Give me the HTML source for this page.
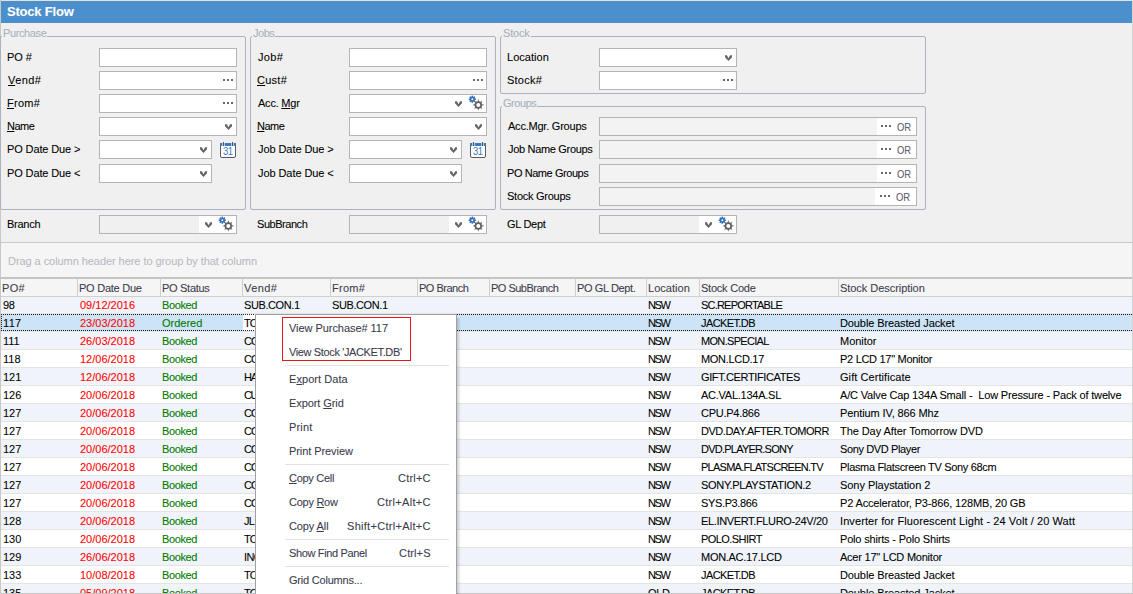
<!DOCTYPE html><html><head><meta charset="utf-8"><title>Stock Flow</title><style>
*{box-sizing:border-box;margin:0;padding:0}
html,body{width:1133px;height:594px;overflow:hidden}
body{position:relative;background:#f0f0f0;font-family:"Liberation Sans",sans-serif;font-size:11px;color:#000;-webkit-text-stroke:0.08px currentColor}
.abs{position:absolute}
.t{position:absolute;white-space:pre;line-height:13px}
.box{position:absolute;border:1px solid #abb2bb;border-radius:2px}
.leg{position:absolute;white-space:pre;color:#a9b1bd;background:#f0f0f0;padding:0 1px 0 1px;line-height:13px}
.in{position:absolute;background:#fff;border:1px solid #b4b4b4;height:19px}
.dis{background:#f0f0f0}
.chev{position:absolute}
.dots{position:absolute}
u{text-decoration:underline;text-underline-offset:1px}
.row{position:absolute;left:1px;width:1131px;height:18px;border-bottom:1px solid #e4e4e4}
.c{position:absolute;white-space:pre;line-height:17px}
.hd{position:absolute;white-space:pre;line-height:17px;color:#3c3c4c}
.mi{position:absolute;left:33px;white-space:pre;line-height:24px;color:#3b3b4b}
.sc{position:absolute;white-space:pre;line-height:24px;color:#3b3b4b}
.sep{position:absolute;left:29px;width:164px;height:1px;background:#e2e2e2}
</style></head><body>
<div class="abs" style="left:0;top:0;width:1133px;height:1px;background:#e4e0dc"></div>
<div class="abs" style="left:0;top:0;width:1px;height:594px;background:#c8c8c8"></div>
<div class="abs" style="left:1132px;top:0;width:1px;height:594px;background:#d4d4d4"></div>
<div class="abs" style="left:1px;top:1px;width:1131px;height:22px;background:#4c8fcd"></div>
<div class="t" style="left:7px;top:4px;color:#fff;font-weight:bold;font-size:13px;line-height:15px;letter-spacing:-0.2px">Stock Flow</div>
<div class="box" style="left:0px;top:36px;width:246px;height:174px"></div>
<div class="leg" style="left:2px;top:27px;letter-spacing:-0.383px;">Purchase</div>
<div class="box" style="left:250px;top:36px;width:246px;height:174px"></div>
<div class="leg" style="left:252px;top:27px;letter-spacing:-0.483px;">Jobs</div>
<div class="box" style="left:500px;top:36px;width:426px;height:58px"></div>
<div class="leg" style="left:502px;top:27px;letter-spacing:-0.179px;">Stock</div>
<div class="box" style="left:500px;top:106px;width:426px;height:104px"></div>
<div class="leg" style="left:502px;top:97px;letter-spacing:-0.456px;">Groups</div>
<div class="t" style="left:7px;top:51px;letter-spacing:-0.026px;">PO #</div>
<div class="in" style="left:99px;top:48px;width:138px"></div>
<div class="t" style="left:8px;top:74px;letter-spacing:0.399px;"><u>V</u>end#</div>
<div class="in" style="left:99px;top:71px;width:138px"></div>
<svg class="dots" style="left:223px;top:79px" width="11" height="3" viewBox="0 0 11 3"><rect x="0" y="0" width="2" height="2" fill="#686868"/><rect x="4" y="0" width="2" height="2" fill="#686868"/><rect x="8" y="0" width="2" height="2" fill="#686868"/></svg>
<div class="t" style="left:7px;top:97px;letter-spacing:0.255px;"><u>F</u>rom#</div>
<div class="in" style="left:99px;top:94px;width:138px"></div>
<svg class="dots" style="left:223px;top:102px" width="11" height="3" viewBox="0 0 11 3"><rect x="0" y="0" width="2" height="2" fill="#686868"/><rect x="4" y="0" width="2" height="2" fill="#686868"/><rect x="8" y="0" width="2" height="2" fill="#686868"/></svg>
<div class="t" style="left:7px;top:120px;letter-spacing:-0.515px;"><u>N</u>ame</div>
<div class="in" style="left:99px;top:117px;width:138px"></div>
<svg class="chev" style="left:225px;top:124px" width="7" height="6" viewBox="0 0 7 6"><path d="M0 0.3 L1.9 0.3 L3.5 3.2 L5.1 0.3 L7 0.3 L7 2.2 L3.5 6 L0 2.2 Z" fill="#656565"/></svg>
<div class="t" style="left:7px;top:143px;letter-spacing:-0.126px;">PO Date Due &gt;</div>
<div class="in" style="left:99px;top:140px;width:113px"></div>
<svg class="chev" style="left:200px;top:147px" width="7" height="6" viewBox="0 0 7 6"><path d="M0 0.3 L1.9 0.3 L3.5 3.2 L5.1 0.3 L7 0.3 L7 2.2 L3.5 6 L0 2.2 Z" fill="#656565"/></svg>
<svg class="abs" style="left:220px;top:142px" width="16" height="16" viewBox="0 0 16 16" shape-rendering="crispEdges"><path d="M0.5 4 V14 Q0.5 15.5 2 15.5 H14 Q15.5 15.5 15.5 14 V4" fill="#fff" stroke="#5a5a5a" stroke-width="1" shape-rendering="auto"/><rect x="0" y="1" width="2" height="3" fill="#3a78c0"/><rect x="5" y="1" width="6" height="3" fill="#3a78c0"/><rect x="14" y="1" width="2" height="3" fill="#3a78c0"/><rect x="3" y="0" width="1" height="4" fill="#555"/><rect x="12" y="0" width="1" height="4" fill="#555"/><rect x="2" y="1" width="1" height="3" fill="#3a78c0" opacity=".35"/><rect x="4" y="1" width="1" height="3" fill="#3a78c0" opacity=".35"/><rect x="11" y="1" width="1" height="3" fill="#3a78c0" opacity=".35"/><rect x="13" y="1" width="1" height="3" fill="#3a78c0" opacity=".35"/><text x="8.3" y="13.1" font-family="Liberation Sans" font-size="10" fill="#3a78c0" text-anchor="middle" letter-spacing="-0.3" transform="scale(0.95 1)" style="font-weight:normal">31</text></svg>
<div class="t" style="left:7px;top:167px;letter-spacing:-0.126px;">PO Date Due &lt;</div>
<div class="in" style="left:99px;top:164px;width:113px"></div>
<svg class="chev" style="left:200px;top:171px" width="7" height="6" viewBox="0 0 7 6"><path d="M0 0.3 L1.9 0.3 L3.5 3.2 L5.1 0.3 L7 0.3 L7 2.2 L3.5 6 L0 2.2 Z" fill="#656565"/></svg>
<div class="t" style="left:7px;top:218px;letter-spacing:-0.252px;">Branch</div>
<div class="in dis" style="left:99px;top:215px;width:138px"></div>
<div class="abs" style="left:199px;top:216px;width:37px;height:17px;background:#fff"></div>
<svg class="chev" style="left:205px;top:222px" width="7" height="6" viewBox="0 0 7 6"><path d="M0 0.3 L1.9 0.3 L3.5 3.2 L5.1 0.3 L7 0.3 L7 2.2 L3.5 6 L0 2.2 Z" fill="#656565"/></svg>
<svg class="abs" style="left:217px;top:216px" width="17" height="17" viewBox="0 0 17 17"><g fill="#2e6fba"><circle cx="5.3" cy="4.2" r="2.5"/><rect x="4.55" y="0.60" width="1.5" height="1.6" transform="rotate(0 5.3 4.2)"/><rect x="4.55" y="0.60" width="1.5" height="1.6" transform="rotate(45 5.3 4.2)"/><rect x="4.55" y="0.60" width="1.5" height="1.6" transform="rotate(90 5.3 4.2)"/><rect x="4.55" y="0.60" width="1.5" height="1.6" transform="rotate(135 5.3 4.2)"/><rect x="4.55" y="0.60" width="1.5" height="1.6" transform="rotate(180 5.3 4.2)"/><rect x="4.55" y="0.60" width="1.5" height="1.6" transform="rotate(225 5.3 4.2)"/><rect x="4.55" y="0.60" width="1.5" height="1.6" transform="rotate(270 5.3 4.2)"/><rect x="4.55" y="0.60" width="1.5" height="1.6" transform="rotate(315 5.3 4.2)"/></g><circle cx="5.3" cy="4.2" r="1.0" fill="#fff"/><g fill="#606060"><circle cx="11.3" cy="9.9" r="3.7"/><path d="M10.45 6.70 L11.30 4.10 L12.15 6.70 Z" transform="rotate(0.0 11.3 9.9)"/><path d="M10.45 6.70 L11.30 4.10 L12.15 6.70 Z" transform="rotate(45.0 11.3 9.9)"/><path d="M10.45 6.70 L11.30 4.10 L12.15 6.70 Z" transform="rotate(90.0 11.3 9.9)"/><path d="M10.45 6.70 L11.30 4.10 L12.15 6.70 Z" transform="rotate(135.0 11.3 9.9)"/><path d="M10.45 6.70 L11.30 4.10 L12.15 6.70 Z" transform="rotate(180.0 11.3 9.9)"/><path d="M10.45 6.70 L11.30 4.10 L12.15 6.70 Z" transform="rotate(225.0 11.3 9.9)"/><path d="M10.45 6.70 L11.30 4.10 L12.15 6.70 Z" transform="rotate(270.0 11.3 9.9)"/><path d="M10.45 6.70 L11.30 4.10 L12.15 6.70 Z" transform="rotate(315.0 11.3 9.9)"/></g><circle cx="11.3" cy="9.9" r="2.0" fill="#fff"/></svg>
<div class="t" style="left:258px;top:51px;letter-spacing:0.314px;">Job#</div>
<div class="in" style="left:349px;top:48px;width:138px"></div>
<div class="t" style="left:257px;top:74px;letter-spacing:0.263px;"><u>C</u>ust#</div>
<div class="in" style="left:349px;top:71px;width:138px"></div>
<svg class="dots" style="left:473px;top:79px" width="11" height="3" viewBox="0 0 11 3"><rect x="0" y="0" width="2" height="2" fill="#686868"/><rect x="4" y="0" width="2" height="2" fill="#686868"/><rect x="8" y="0" width="2" height="2" fill="#686868"/></svg>
<div class="t" style="left:258px;top:97px;letter-spacing:-0.229px;">Acc. <u>M</u>gr</div>
<div class="in" style="left:349px;top:94px;width:138px"></div>
<svg class="chev" style="left:455px;top:101px" width="7" height="6" viewBox="0 0 7 6"><path d="M0 0.3 L1.9 0.3 L3.5 3.2 L5.1 0.3 L7 0.3 L7 2.2 L3.5 6 L0 2.2 Z" fill="#656565"/></svg>
<svg class="abs" style="left:467px;top:95px" width="17" height="17" viewBox="0 0 17 17"><g fill="#2e6fba"><circle cx="5.3" cy="4.2" r="2.5"/><rect x="4.55" y="0.60" width="1.5" height="1.6" transform="rotate(0 5.3 4.2)"/><rect x="4.55" y="0.60" width="1.5" height="1.6" transform="rotate(45 5.3 4.2)"/><rect x="4.55" y="0.60" width="1.5" height="1.6" transform="rotate(90 5.3 4.2)"/><rect x="4.55" y="0.60" width="1.5" height="1.6" transform="rotate(135 5.3 4.2)"/><rect x="4.55" y="0.60" width="1.5" height="1.6" transform="rotate(180 5.3 4.2)"/><rect x="4.55" y="0.60" width="1.5" height="1.6" transform="rotate(225 5.3 4.2)"/><rect x="4.55" y="0.60" width="1.5" height="1.6" transform="rotate(270 5.3 4.2)"/><rect x="4.55" y="0.60" width="1.5" height="1.6" transform="rotate(315 5.3 4.2)"/></g><circle cx="5.3" cy="4.2" r="1.0" fill="#fff"/><g fill="#606060"><circle cx="11.3" cy="9.9" r="3.7"/><path d="M10.45 6.70 L11.30 4.10 L12.15 6.70 Z" transform="rotate(0.0 11.3 9.9)"/><path d="M10.45 6.70 L11.30 4.10 L12.15 6.70 Z" transform="rotate(45.0 11.3 9.9)"/><path d="M10.45 6.70 L11.30 4.10 L12.15 6.70 Z" transform="rotate(90.0 11.3 9.9)"/><path d="M10.45 6.70 L11.30 4.10 L12.15 6.70 Z" transform="rotate(135.0 11.3 9.9)"/><path d="M10.45 6.70 L11.30 4.10 L12.15 6.70 Z" transform="rotate(180.0 11.3 9.9)"/><path d="M10.45 6.70 L11.30 4.10 L12.15 6.70 Z" transform="rotate(225.0 11.3 9.9)"/><path d="M10.45 6.70 L11.30 4.10 L12.15 6.70 Z" transform="rotate(270.0 11.3 9.9)"/><path d="M10.45 6.70 L11.30 4.10 L12.15 6.70 Z" transform="rotate(315.0 11.3 9.9)"/></g><circle cx="11.3" cy="9.9" r="2.0" fill="#fff"/></svg>
<div class="t" style="left:257px;top:120px;letter-spacing:-0.515px;"><u>N</u>ame</div>
<div class="in" style="left:349px;top:117px;width:138px"></div>
<svg class="chev" style="left:475px;top:124px" width="7" height="6" viewBox="0 0 7 6"><path d="M0 0.3 L1.9 0.3 L3.5 3.2 L5.1 0.3 L7 0.3 L7 2.2 L3.5 6 L0 2.2 Z" fill="#656565"/></svg>
<div class="t" style="left:258px;top:143px;letter-spacing:-0.073px;">Job Date Due &gt;</div>
<div class="in" style="left:349px;top:140px;width:113px"></div>
<svg class="chev" style="left:450px;top:147px" width="7" height="6" viewBox="0 0 7 6"><path d="M0 0.3 L1.9 0.3 L3.5 3.2 L5.1 0.3 L7 0.3 L7 2.2 L3.5 6 L0 2.2 Z" fill="#656565"/></svg>
<svg class="abs" style="left:470px;top:142px" width="16" height="16" viewBox="0 0 16 16" shape-rendering="crispEdges"><path d="M0.5 4 V14 Q0.5 15.5 2 15.5 H14 Q15.5 15.5 15.5 14 V4" fill="#fff" stroke="#5a5a5a" stroke-width="1" shape-rendering="auto"/><rect x="0" y="1" width="2" height="3" fill="#3a78c0"/><rect x="5" y="1" width="6" height="3" fill="#3a78c0"/><rect x="14" y="1" width="2" height="3" fill="#3a78c0"/><rect x="3" y="0" width="1" height="4" fill="#555"/><rect x="12" y="0" width="1" height="4" fill="#555"/><rect x="2" y="1" width="1" height="3" fill="#3a78c0" opacity=".35"/><rect x="4" y="1" width="1" height="3" fill="#3a78c0" opacity=".35"/><rect x="11" y="1" width="1" height="3" fill="#3a78c0" opacity=".35"/><rect x="13" y="1" width="1" height="3" fill="#3a78c0" opacity=".35"/><text x="8.3" y="13.1" font-family="Liberation Sans" font-size="10" fill="#3a78c0" text-anchor="middle" letter-spacing="-0.3" transform="scale(0.95 1)" style="font-weight:normal">31</text></svg>
<div class="t" style="left:258px;top:167px;letter-spacing:-0.073px;">Job Date Due &lt;</div>
<div class="in" style="left:349px;top:164px;width:113px"></div>
<svg class="chev" style="left:450px;top:171px" width="7" height="6" viewBox="0 0 7 6"><path d="M0 0.3 L1.9 0.3 L3.5 3.2 L5.1 0.3 L7 0.3 L7 2.2 L3.5 6 L0 2.2 Z" fill="#656565"/></svg>
<div class="t" style="left:257px;top:218px;letter-spacing:-0.455px;">SubBranch</div>
<div class="in dis" style="left:349px;top:215px;width:138px"></div>
<div class="abs" style="left:449px;top:216px;width:37px;height:17px;background:#fff"></div>
<svg class="chev" style="left:455px;top:222px" width="7" height="6" viewBox="0 0 7 6"><path d="M0 0.3 L1.9 0.3 L3.5 3.2 L5.1 0.3 L7 0.3 L7 2.2 L3.5 6 L0 2.2 Z" fill="#656565"/></svg>
<svg class="abs" style="left:467px;top:216px" width="17" height="17" viewBox="0 0 17 17"><g fill="#2e6fba"><circle cx="5.3" cy="4.2" r="2.5"/><rect x="4.55" y="0.60" width="1.5" height="1.6" transform="rotate(0 5.3 4.2)"/><rect x="4.55" y="0.60" width="1.5" height="1.6" transform="rotate(45 5.3 4.2)"/><rect x="4.55" y="0.60" width="1.5" height="1.6" transform="rotate(90 5.3 4.2)"/><rect x="4.55" y="0.60" width="1.5" height="1.6" transform="rotate(135 5.3 4.2)"/><rect x="4.55" y="0.60" width="1.5" height="1.6" transform="rotate(180 5.3 4.2)"/><rect x="4.55" y="0.60" width="1.5" height="1.6" transform="rotate(225 5.3 4.2)"/><rect x="4.55" y="0.60" width="1.5" height="1.6" transform="rotate(270 5.3 4.2)"/><rect x="4.55" y="0.60" width="1.5" height="1.6" transform="rotate(315 5.3 4.2)"/></g><circle cx="5.3" cy="4.2" r="1.0" fill="#fff"/><g fill="#606060"><circle cx="11.3" cy="9.9" r="3.7"/><path d="M10.45 6.70 L11.30 4.10 L12.15 6.70 Z" transform="rotate(0.0 11.3 9.9)"/><path d="M10.45 6.70 L11.30 4.10 L12.15 6.70 Z" transform="rotate(45.0 11.3 9.9)"/><path d="M10.45 6.70 L11.30 4.10 L12.15 6.70 Z" transform="rotate(90.0 11.3 9.9)"/><path d="M10.45 6.70 L11.30 4.10 L12.15 6.70 Z" transform="rotate(135.0 11.3 9.9)"/><path d="M10.45 6.70 L11.30 4.10 L12.15 6.70 Z" transform="rotate(180.0 11.3 9.9)"/><path d="M10.45 6.70 L11.30 4.10 L12.15 6.70 Z" transform="rotate(225.0 11.3 9.9)"/><path d="M10.45 6.70 L11.30 4.10 L12.15 6.70 Z" transform="rotate(270.0 11.3 9.9)"/><path d="M10.45 6.70 L11.30 4.10 L12.15 6.70 Z" transform="rotate(315.0 11.3 9.9)"/></g><circle cx="11.3" cy="9.9" r="2.0" fill="#fff"/></svg>
<div class="t" style="left:507px;top:51px;letter-spacing:0.029px;">Location</div>
<div class="in" style="left:599px;top:48px;width:138px"></div>
<svg class="chev" style="left:725px;top:55px" width="7" height="6" viewBox="0 0 7 6"><path d="M0 0.3 L1.9 0.3 L3.5 3.2 L5.1 0.3 L7 0.3 L7 2.2 L3.5 6 L0 2.2 Z" fill="#656565"/></svg>
<div class="t" style="left:507px;top:74px;letter-spacing:0.232px;">Stock#</div>
<div class="in" style="left:599px;top:71px;width:138px"></div>
<svg class="dots" style="left:723px;top:79px" width="11" height="3" viewBox="0 0 11 3"><rect x="0" y="0" width="2" height="2" fill="#686868"/><rect x="4" y="0" width="2" height="2" fill="#686868"/><rect x="8" y="0" width="2" height="2" fill="#686868"/></svg>
<div class="t" style="left:508px;top:120px;letter-spacing:-0.223px;">Acc.Mgr. Groups</div>
<div class="in dis" style="left:599px;top:117px;width:318px;background:#f3f3f3"></div>
<div class="abs" style="left:877px;top:118px;width:39px;height:17px;background:#fff"></div>
<svg class="dots" style="left:881px;top:125px" width="11" height="3" viewBox="0 0 11 3"><rect x="0" y="0" width="2" height="2" fill="#686868"/><rect x="4" y="0" width="2" height="2" fill="#686868"/><rect x="8" y="0" width="2" height="2" fill="#686868"/></svg>
<div class="t" style="left:897px;top:121px;color:#606070;transform:scaleX(0.86);transform-origin:0 0">OR</div>
<div class="t" style="left:508px;top:143px;letter-spacing:-0.319px;">Job Name Groups</div>
<div class="in dis" style="left:599px;top:140px;width:318px;background:#f3f3f3"></div>
<div class="abs" style="left:877px;top:141px;width:39px;height:17px;background:#fff"></div>
<svg class="dots" style="left:881px;top:148px" width="11" height="3" viewBox="0 0 11 3"><rect x="0" y="0" width="2" height="2" fill="#686868"/><rect x="4" y="0" width="2" height="2" fill="#686868"/><rect x="8" y="0" width="2" height="2" fill="#686868"/></svg>
<div class="t" style="left:897px;top:144px;color:#606070;transform:scaleX(0.86);transform-origin:0 0">OR</div>
<div class="t" style="left:507px;top:167px;letter-spacing:-0.432px;">PO Name Groups</div>
<div class="in dis" style="left:599px;top:164px;width:318px;background:#f3f3f3"></div>
<div class="abs" style="left:877px;top:165px;width:39px;height:17px;background:#fff"></div>
<svg class="dots" style="left:881px;top:172px" width="11" height="3" viewBox="0 0 11 3"><rect x="0" y="0" width="2" height="2" fill="#686868"/><rect x="4" y="0" width="2" height="2" fill="#686868"/><rect x="8" y="0" width="2" height="2" fill="#686868"/></svg>
<div class="t" style="left:897px;top:168px;color:#606070;transform:scaleX(0.86);transform-origin:0 0">OR</div>
<div class="t" style="left:507px;top:190px;letter-spacing:-0.258px;">Stock Groups</div>
<div class="in dis" style="left:599px;top:187px;width:318px;background:#f3f3f3"></div>
<div class="abs" style="left:875px;top:188px;width:41px;height:17px;background:#fff"></div>
<svg class="dots" style="left:880px;top:195px" width="11" height="3" viewBox="0 0 11 3"><rect x="0" y="0" width="2" height="2" fill="#686868"/><rect x="4" y="0" width="2" height="2" fill="#686868"/><rect x="8" y="0" width="2" height="2" fill="#686868"/></svg>
<div class="t" style="left:896px;top:191px;color:#606070;transform:scaleX(0.86);transform-origin:0 0">OR</div>
<div class="t" style="left:507px;top:218px;letter-spacing:-0.294px;">GL Dept</div>
<div class="in dis" style="left:599px;top:215px;width:138px"></div>
<div class="abs" style="left:699px;top:216px;width:37px;height:17px;background:#fff"></div>
<svg class="chev" style="left:705px;top:222px" width="7" height="6" viewBox="0 0 7 6"><path d="M0 0.3 L1.9 0.3 L3.5 3.2 L5.1 0.3 L7 0.3 L7 2.2 L3.5 6 L0 2.2 Z" fill="#656565"/></svg>
<svg class="abs" style="left:717px;top:216px" width="17" height="17" viewBox="0 0 17 17"><g fill="#2e6fba"><circle cx="5.3" cy="4.2" r="2.5"/><rect x="4.55" y="0.60" width="1.5" height="1.6" transform="rotate(0 5.3 4.2)"/><rect x="4.55" y="0.60" width="1.5" height="1.6" transform="rotate(45 5.3 4.2)"/><rect x="4.55" y="0.60" width="1.5" height="1.6" transform="rotate(90 5.3 4.2)"/><rect x="4.55" y="0.60" width="1.5" height="1.6" transform="rotate(135 5.3 4.2)"/><rect x="4.55" y="0.60" width="1.5" height="1.6" transform="rotate(180 5.3 4.2)"/><rect x="4.55" y="0.60" width="1.5" height="1.6" transform="rotate(225 5.3 4.2)"/><rect x="4.55" y="0.60" width="1.5" height="1.6" transform="rotate(270 5.3 4.2)"/><rect x="4.55" y="0.60" width="1.5" height="1.6" transform="rotate(315 5.3 4.2)"/></g><circle cx="5.3" cy="4.2" r="1.0" fill="#fff"/><g fill="#606060"><circle cx="11.3" cy="9.9" r="3.7"/><path d="M10.45 6.70 L11.30 4.10 L12.15 6.70 Z" transform="rotate(0.0 11.3 9.9)"/><path d="M10.45 6.70 L11.30 4.10 L12.15 6.70 Z" transform="rotate(45.0 11.3 9.9)"/><path d="M10.45 6.70 L11.30 4.10 L12.15 6.70 Z" transform="rotate(90.0 11.3 9.9)"/><path d="M10.45 6.70 L11.30 4.10 L12.15 6.70 Z" transform="rotate(135.0 11.3 9.9)"/><path d="M10.45 6.70 L11.30 4.10 L12.15 6.70 Z" transform="rotate(180.0 11.3 9.9)"/><path d="M10.45 6.70 L11.30 4.10 L12.15 6.70 Z" transform="rotate(225.0 11.3 9.9)"/><path d="M10.45 6.70 L11.30 4.10 L12.15 6.70 Z" transform="rotate(270.0 11.3 9.9)"/><path d="M10.45 6.70 L11.30 4.10 L12.15 6.70 Z" transform="rotate(315.0 11.3 9.9)"/></g><circle cx="11.3" cy="9.9" r="2.0" fill="#fff"/></svg>
<div class="abs" style="left:1px;top:242px;width:1131px;height:1px;background:#c8c8c8"></div>
<div class="abs" style="left:1px;top:243px;width:1131px;height:34px;background:#f5f5f5"></div>
<div class="t" style="left:8px;top:255px;color:#b8bac4;letter-spacing:-0.061px;">Drag a column header here to group by that column</div>
<div class="abs" style="left:1px;top:277px;width:1131px;height:2px;background:#c4c4c4"></div>
<div class="abs" style="left:1px;top:279px;width:1131px;height:18px;background:#f5f5f5;border-bottom:1px solid #d0d0d0"></div>
<div class="abs" style="left:1px;top:279px;width:1px;height:17px;background:#ffffff"></div>
<div class="hd" style="left:2px;top:280px;letter-spacing:0.342px;">PO#</div>
<div class="abs" style="left:77px;top:279px;width:1px;height:17px;background:#d0d0d0"></div>
<div class="hd" style="left:79px;top:280px;letter-spacing:-0.252px;">PO Date Due</div>
<div class="abs" style="left:160px;top:279px;width:1px;height:17px;background:#d0d0d0"></div>
<div class="hd" style="left:162px;top:280px;letter-spacing:-0.293px;">PO Status</div>
<div class="abs" style="left:242px;top:279px;width:1px;height:17px;background:#d0d0d0"></div>
<div class="hd" style="left:244px;top:280px;letter-spacing:0.399px;">Vend#</div>
<div class="abs" style="left:330px;top:279px;width:1px;height:17px;background:#d0d0d0"></div>
<div class="hd" style="left:332px;top:280px;letter-spacing:0.255px;">From#</div>
<div class="abs" style="left:417px;top:279px;width:1px;height:17px;background:#d0d0d0"></div>
<div class="hd" style="left:419px;top:280px;letter-spacing:-0.502px;">PO Branch</div>
<div class="abs" style="left:489px;top:279px;width:1px;height:17px;background:#d0d0d0"></div>
<div class="hd" style="left:491px;top:280px;letter-spacing:-0.507px;">PO SubBranch</div>
<div class="abs" style="left:575px;top:279px;width:1px;height:17px;background:#d0d0d0"></div>
<div class="hd" style="left:577px;top:280px;letter-spacing:-0.376px;">PO GL Dept.</div>
<div class="abs" style="left:646px;top:279px;width:1px;height:17px;background:#d0d0d0"></div>
<div class="hd" style="left:648px;top:280px;letter-spacing:0.029px;">Location</div>
<div class="abs" style="left:699px;top:279px;width:1px;height:17px;background:#d0d0d0"></div>
<div class="hd" style="left:701px;top:280px;letter-spacing:-0.231px;">Stock Code</div>
<div class="abs" style="left:838px;top:279px;width:1px;height:17px;background:#d0d0d0"></div>
<div class="hd" style="left:840px;top:280px;letter-spacing:-0.050px;">Stock Description</div>
<div class="row" style="top:296px;background:#f0f4fa"></div>
<div class="c" style="left:3px;top:297px;color:#000;letter-spacing:-0.250px;">98</div>
<div class="c" style="left:80px;top:297px;color:#ff0000;">09/12/2016</div>
<div class="c" style="left:162px;top:297px;color:#007a00;letter-spacing:-0.383px;">Booked</div>
<div class="c" style="left:244px;top:297px;color:#000;letter-spacing:-0.412px;">SUB.CON.1</div>
<div class="c" style="left:332px;top:297px;color:#000;letter-spacing:-0.412px;">SUB.CON.1</div>
<div class="c" style="left:648px;top:297px;color:#000;letter-spacing:-1.336px;">NSW</div>
<div class="c" style="left:701px;top:297px;color:#000;letter-spacing:-0.791px;">SC.REPORTABLE</div>
<div class="row" style="top:314px;background:#cde3f6"></div>
<div class="abs" style="left:243px;top:314px;width:87px;height:17px;background:#fff"></div>
<div class="c" style="left:3px;top:315px;color:#000;letter-spacing:0.327px;">117</div>
<div class="c" style="left:80px;top:315px;color:#ff0000;">23/03/2018</div>
<div class="c" style="left:162px;top:315px;color:#007a00;">Ordered</div>
<div class="c" style="left:244px;top:315px;color:#000;letter-spacing:-0.738px;">TOMMY</div>
<div class="c" style="left:648px;top:315px;color:#000;letter-spacing:-1.336px;">NSW</div>
<div class="c" style="left:701px;top:315px;color:#000;letter-spacing:-0.600px;">JACKET.DB</div>
<div class="c" style="left:840px;top:315px;color:#000;letter-spacing:-0.105px;">Double Breasted Jacket</div>
<div class="abs" style="left:1px;top:314px;width:1131px;height:1px;background:repeating-linear-gradient(to right,#1a1a1a 0 1px,transparent 1px 2px)"></div>
<div class="abs" style="left:1px;top:330px;width:1131px;height:1px;background:repeating-linear-gradient(to right,#1a1a1a 0 1px,transparent 1px 2px)"></div>
<div class="abs" style="left:1px;top:314px;width:1px;height:17px;background:repeating-linear-gradient(to bottom,#1a1a1a 0 1px,transparent 1px 2px)"></div>
<div class="row" style="top:332px;background:#f0f4fa"></div>
<div class="c" style="left:3px;top:333px;color:#000;">111</div>
<div class="c" style="left:80px;top:333px;color:#ff0000;">26/03/2018</div>
<div class="c" style="left:162px;top:333px;color:#007a00;letter-spacing:-0.383px;">Booked</div>
<div class="c" style="left:244px;top:333px;color:#000;letter-spacing:-1.067px;">COMP</div>
<div class="c" style="left:648px;top:333px;color:#000;letter-spacing:-1.336px;">NSW</div>
<div class="c" style="left:701px;top:333px;color:#000;letter-spacing:-0.679px;">MON.SPECIAL</div>
<div class="c" style="left:840px;top:333px;color:#000;letter-spacing:-0.031px;">Monitor</div>
<div class="row" style="top:350px;background:#ffffff"></div>
<div class="c" style="left:3px;top:351px;color:#000;">118</div>
<div class="c" style="left:80px;top:351px;color:#ff0000;">12/06/2018</div>
<div class="c" style="left:162px;top:351px;color:#007a00;letter-spacing:-0.383px;">Booked</div>
<div class="c" style="left:244px;top:351px;color:#000;letter-spacing:-1.067px;">COMP</div>
<div class="c" style="left:648px;top:351px;color:#000;letter-spacing:-1.336px;">NSW</div>
<div class="c" style="left:701px;top:351px;color:#000;letter-spacing:-0.303px;">MON.LCD.17</div>
<div class="c" style="left:840px;top:351px;color:#000;letter-spacing:-0.291px;">P2 LCD 17&quot; Monitor</div>
<div class="row" style="top:368px;background:#f0f4fa"></div>
<div class="c" style="left:3px;top:369px;color:#000;">121</div>
<div class="c" style="left:80px;top:369px;color:#ff0000;">12/06/2018</div>
<div class="c" style="left:162px;top:369px;color:#007a00;letter-spacing:-0.383px;">Booked</div>
<div class="c" style="left:244px;top:369px;color:#000;letter-spacing:-1.128px;">HARRY</div>
<div class="c" style="left:648px;top:369px;color:#000;letter-spacing:-1.336px;">NSW</div>
<div class="c" style="left:701px;top:369px;color:#000;letter-spacing:-0.371px;">GIFT.CERTIFICATES</div>
<div class="c" style="left:840px;top:369px;color:#000;letter-spacing:0.068px;">Gift Certificate</div>
<div class="row" style="top:386px;background:#ffffff"></div>
<div class="c" style="left:3px;top:387px;color:#000;">126</div>
<div class="c" style="left:80px;top:387px;color:#ff0000;">20/06/2018</div>
<div class="c" style="left:162px;top:387px;color:#007a00;letter-spacing:-0.383px;">Booked</div>
<div class="c" style="left:244px;top:387px;color:#000;letter-spacing:-1.384px;">CUST</div>
<div class="c" style="left:648px;top:387px;color:#000;letter-spacing:-1.336px;">NSW</div>
<div class="c" style="left:701px;top:387px;color:#000;letter-spacing:-0.252px;">AC.VAL.134A.SL</div>
<div class="c" style="left:840px;top:387px;color:#000;letter-spacing:-0.165px;">A/C Valve Cap 134A Small -  Low Pressure - Pack of twelve</div>
<div class="row" style="top:404px;background:#f0f4fa"></div>
<div class="c" style="left:3px;top:405px;color:#000;">127</div>
<div class="c" style="left:80px;top:405px;color:#ff0000;">20/06/2018</div>
<div class="c" style="left:162px;top:405px;color:#007a00;letter-spacing:-0.383px;">Booked</div>
<div class="c" style="left:244px;top:405px;color:#000;letter-spacing:-1.067px;">COMP</div>
<div class="c" style="left:648px;top:405px;color:#000;letter-spacing:-1.336px;">NSW</div>
<div class="c" style="left:701px;top:405px;color:#000;letter-spacing:-0.262px;">CPU.P4.866</div>
<div class="c" style="left:840px;top:405px;color:#000;letter-spacing:-0.112px;">Pentium IV, 866 Mhz</div>
<div class="row" style="top:422px;background:#ffffff"></div>
<div class="c" style="left:3px;top:423px;color:#000;">127</div>
<div class="c" style="left:80px;top:423px;color:#ff0000;">20/06/2018</div>
<div class="c" style="left:162px;top:423px;color:#007a00;letter-spacing:-0.383px;">Booked</div>
<div class="c" style="left:244px;top:423px;color:#000;letter-spacing:-1.067px;">COMP</div>
<div class="c" style="left:648px;top:423px;color:#000;letter-spacing:-1.336px;">NSW</div>
<div class="c" style="left:701px;top:423px;color:#000;letter-spacing:-0.475px;">DVD.DAY.AFTER.TOMORR</div>
<div class="c" style="left:840px;top:423px;color:#000;letter-spacing:-0.068px;">The Day After Tomorrow DVD</div>
<div class="row" style="top:440px;background:#f0f4fa"></div>
<div class="c" style="left:3px;top:441px;color:#000;">127</div>
<div class="c" style="left:80px;top:441px;color:#ff0000;">20/06/2018</div>
<div class="c" style="left:162px;top:441px;color:#007a00;letter-spacing:-0.383px;">Booked</div>
<div class="c" style="left:244px;top:441px;color:#000;letter-spacing:-1.067px;">COMP</div>
<div class="c" style="left:648px;top:441px;color:#000;letter-spacing:-1.336px;">NSW</div>
<div class="c" style="left:701px;top:441px;color:#000;letter-spacing:-0.758px;">DVD.PLAYER.SONY</div>
<div class="c" style="left:840px;top:441px;color:#000;letter-spacing:-0.371px;">Sony DVD Player</div>
<div class="row" style="top:458px;background:#ffffff"></div>
<div class="c" style="left:3px;top:459px;color:#000;">127</div>
<div class="c" style="left:80px;top:459px;color:#ff0000;">20/06/2018</div>
<div class="c" style="left:162px;top:459px;color:#007a00;letter-spacing:-0.383px;">Booked</div>
<div class="c" style="left:244px;top:459px;color:#000;letter-spacing:-1.067px;">COMP</div>
<div class="c" style="left:648px;top:459px;color:#000;letter-spacing:-1.336px;">NSW</div>
<div class="c" style="left:701px;top:459px;color:#000;letter-spacing:-0.743px;">PLASMA.FLATSCREEN.TV</div>
<div class="c" style="left:840px;top:459px;color:#000;letter-spacing:-0.324px;">Plasma Flatscreen TV Sony 68cm</div>
<div class="row" style="top:476px;background:#f0f4fa"></div>
<div class="c" style="left:3px;top:477px;color:#000;">127</div>
<div class="c" style="left:80px;top:477px;color:#ff0000;">20/06/2018</div>
<div class="c" style="left:162px;top:477px;color:#007a00;letter-spacing:-0.383px;">Booked</div>
<div class="c" style="left:244px;top:477px;color:#000;letter-spacing:-1.067px;">COMP</div>
<div class="c" style="left:648px;top:477px;color:#000;letter-spacing:-1.336px;">NSW</div>
<div class="c" style="left:701px;top:477px;color:#000;letter-spacing:-0.303px;">SONY.PLAYSTATION.2</div>
<div class="c" style="left:840px;top:477px;color:#000;letter-spacing:-0.043px;">Sony Playstation 2</div>
<div class="row" style="top:494px;background:#ffffff"></div>
<div class="c" style="left:3px;top:495px;color:#000;">127</div>
<div class="c" style="left:80px;top:495px;color:#ff0000;">20/06/2018</div>
<div class="c" style="left:162px;top:495px;color:#007a00;letter-spacing:-0.383px;">Booked</div>
<div class="c" style="left:244px;top:495px;color:#000;letter-spacing:-1.067px;">COMP</div>
<div class="c" style="left:648px;top:495px;color:#000;letter-spacing:-1.336px;">NSW</div>
<div class="c" style="left:701px;top:495px;color:#000;letter-spacing:-0.360px;">SYS.P3.866</div>
<div class="c" style="left:840px;top:495px;color:#000;letter-spacing:-0.148px;">P2 Accelerator, P3-866, 128MB, 20 GB</div>
<div class="row" style="top:512px;background:#f0f4fa"></div>
<div class="c" style="left:3px;top:513px;color:#000;">128</div>
<div class="c" style="left:80px;top:513px;color:#ff0000;">20/06/2018</div>
<div class="c" style="left:162px;top:513px;color:#007a00;letter-spacing:-0.383px;">Booked</div>
<div class="c" style="left:244px;top:513px;color:#000;letter-spacing:-0.825px;">JL</div>
<div class="c" style="left:648px;top:513px;color:#000;letter-spacing:-1.336px;">NSW</div>
<div class="c" style="left:701px;top:513px;color:#000;letter-spacing:-0.357px;">EL.INVERT.FLURO-24V/20</div>
<div class="c" style="left:840px;top:513px;color:#000;letter-spacing:0.088px;">Inverter for Fluorescent Light - 24 Volt / 20 Watt</div>
<div class="row" style="top:530px;background:#ffffff"></div>
<div class="c" style="left:3px;top:531px;color:#000;">130</div>
<div class="c" style="left:80px;top:531px;color:#ff0000;">20/06/2018</div>
<div class="c" style="left:162px;top:531px;color:#007a00;letter-spacing:-0.383px;">Booked</div>
<div class="c" style="left:244px;top:531px;color:#000;letter-spacing:-0.738px;">TOMMY</div>
<div class="c" style="left:648px;top:531px;color:#000;letter-spacing:-1.336px;">NSW</div>
<div class="c" style="left:701px;top:531px;color:#000;letter-spacing:-0.560px;">POLO.SHIRT</div>
<div class="c" style="left:840px;top:531px;color:#000;letter-spacing:-0.176px;">Polo shirts - Polo Shirts</div>
<div class="row" style="top:548px;background:#f0f4fa"></div>
<div class="c" style="left:3px;top:549px;color:#000;">129</div>
<div class="c" style="left:80px;top:549px;color:#ff0000;">26/06/2018</div>
<div class="c" style="left:162px;top:549px;color:#007a00;letter-spacing:-0.383px;">Booked</div>
<div class="c" style="left:244px;top:549px;color:#000;letter-spacing:-0.640px;">INGRAM</div>
<div class="c" style="left:648px;top:549px;color:#000;letter-spacing:-1.336px;">NSW</div>
<div class="c" style="left:701px;top:549px;color:#000;letter-spacing:-0.288px;">MON.AC.17.LCD</div>
<div class="c" style="left:840px;top:549px;color:#000;letter-spacing:-0.233px;">Acer 17&quot; LCD Monitor</div>
<div class="row" style="top:566px;background:#ffffff"></div>
<div class="c" style="left:3px;top:567px;color:#000;">133</div>
<div class="c" style="left:80px;top:567px;color:#ff0000;">10/08/2018</div>
<div class="c" style="left:162px;top:567px;color:#007a00;letter-spacing:-0.383px;">Booked</div>
<div class="c" style="left:244px;top:567px;color:#000;letter-spacing:-0.738px;">TOMMY</div>
<div class="c" style="left:648px;top:567px;color:#000;letter-spacing:-1.336px;">NSW</div>
<div class="c" style="left:701px;top:567px;color:#000;letter-spacing:-0.600px;">JACKET.DB</div>
<div class="c" style="left:840px;top:567px;color:#000;letter-spacing:-0.105px;">Double Breasted Jacket</div>
<div class="row" style="top:584px;background:#f0f4fa"></div>
<div class="c" style="left:3px;top:585px;color:#000;">135</div>
<div class="c" style="left:80px;top:585px;color:#ff0000;">05/09/2018</div>
<div class="c" style="left:162px;top:585px;color:#007a00;letter-spacing:-0.383px;">Booked</div>
<div class="c" style="left:244px;top:585px;color:#000;letter-spacing:-0.738px;">TOMMY</div>
<div class="c" style="left:648px;top:585px;color:#000;letter-spacing:-0.312px;">QLD</div>
<div class="c" style="left:701px;top:585px;color:#000;letter-spacing:-0.600px;">JACKET.DB</div>
<div class="c" style="left:840px;top:585px;color:#000;letter-spacing:-0.105px;">Double Breasted Jacket</div>
<div class="abs" style="left:1px;top:296px;width:1131px;height:1px;background:#d0d0d0"></div>
<div class="abs" style="left:1132px;top:0;width:1px;height:594px;background:#d4d4d4"></div>
<div class="abs" style="left:0;top:593px;width:1133px;height:1px;background:#c8c8c8"></div>
<div class="abs" style="left:457px;top:318px;width:4px;height:276px;background:linear-gradient(to right,rgba(0,0,0,.18),rgba(0,0,0,0))"></div>
<div class="abs" style="left:255px;top:314px;width:202px;height:290px;background:#fff;border:1px solid #a0a0a0">
<div class="mi" style="top:1px;letter-spacing:-0.052px;">View Purchase# 117</div>
<div class="mi" style="top:25px;letter-spacing:-0.370px;">View Stock 'JACKET.DB'</div>
<div class="sep" style="top:50px"></div>
<div class="mi" style="top:52px;letter-spacing:0.061px;">E<u>x</u>port Data</div>
<div class="mi" style="top:76px;letter-spacing:-0.084px;">Export <u>G</u>rid</div>
<div class="mi" style="top:100px;letter-spacing:0.144px;">Print</div>
<div class="mi" style="top:124px;letter-spacing:-0.075px;">Print Preview</div>
<div class="sep" style="top:149px"></div>
<div class="mi" style="top:151px;letter-spacing:-0.286px;"><u>C</u>opy Cell</div>
<div class="sc" style="left:142.0px;top:151px;letter-spacing:0.203px;">Ctrl+C</div>
<div class="mi" style="top:175px;letter-spacing:-0.264px;">Copy <u>R</u>ow</div>
<div class="sc" style="left:120.9px;top:175px;letter-spacing:0.317px;">Ctrl+Alt+C</div>
<div class="mi" style="top:199px;letter-spacing:-0.108px;">Copy <u>A</u>ll</div>
<div class="sc" style="left:91.0px;top:199px;letter-spacing:0.289px;">Shift+Ctrl+Alt+C</div>
<div class="sep" style="top:224px"></div>
<div class="mi" style="top:226px;letter-spacing:-0.355px;">Show Find Panel</div>
<div class="sc" style="left:143.1px;top:226px;letter-spacing:0.105px;">Ctrl+S</div>
<div class="sep" style="top:251px"></div>
<div class="mi" style="top:253px;letter-spacing:-0.209px;">Grid Columns...</div>
</div>
<div class="abs" style="left:282px;top:317px;width:129px;height:44px;border:1px solid #e8141c"></div>
</body></html>
